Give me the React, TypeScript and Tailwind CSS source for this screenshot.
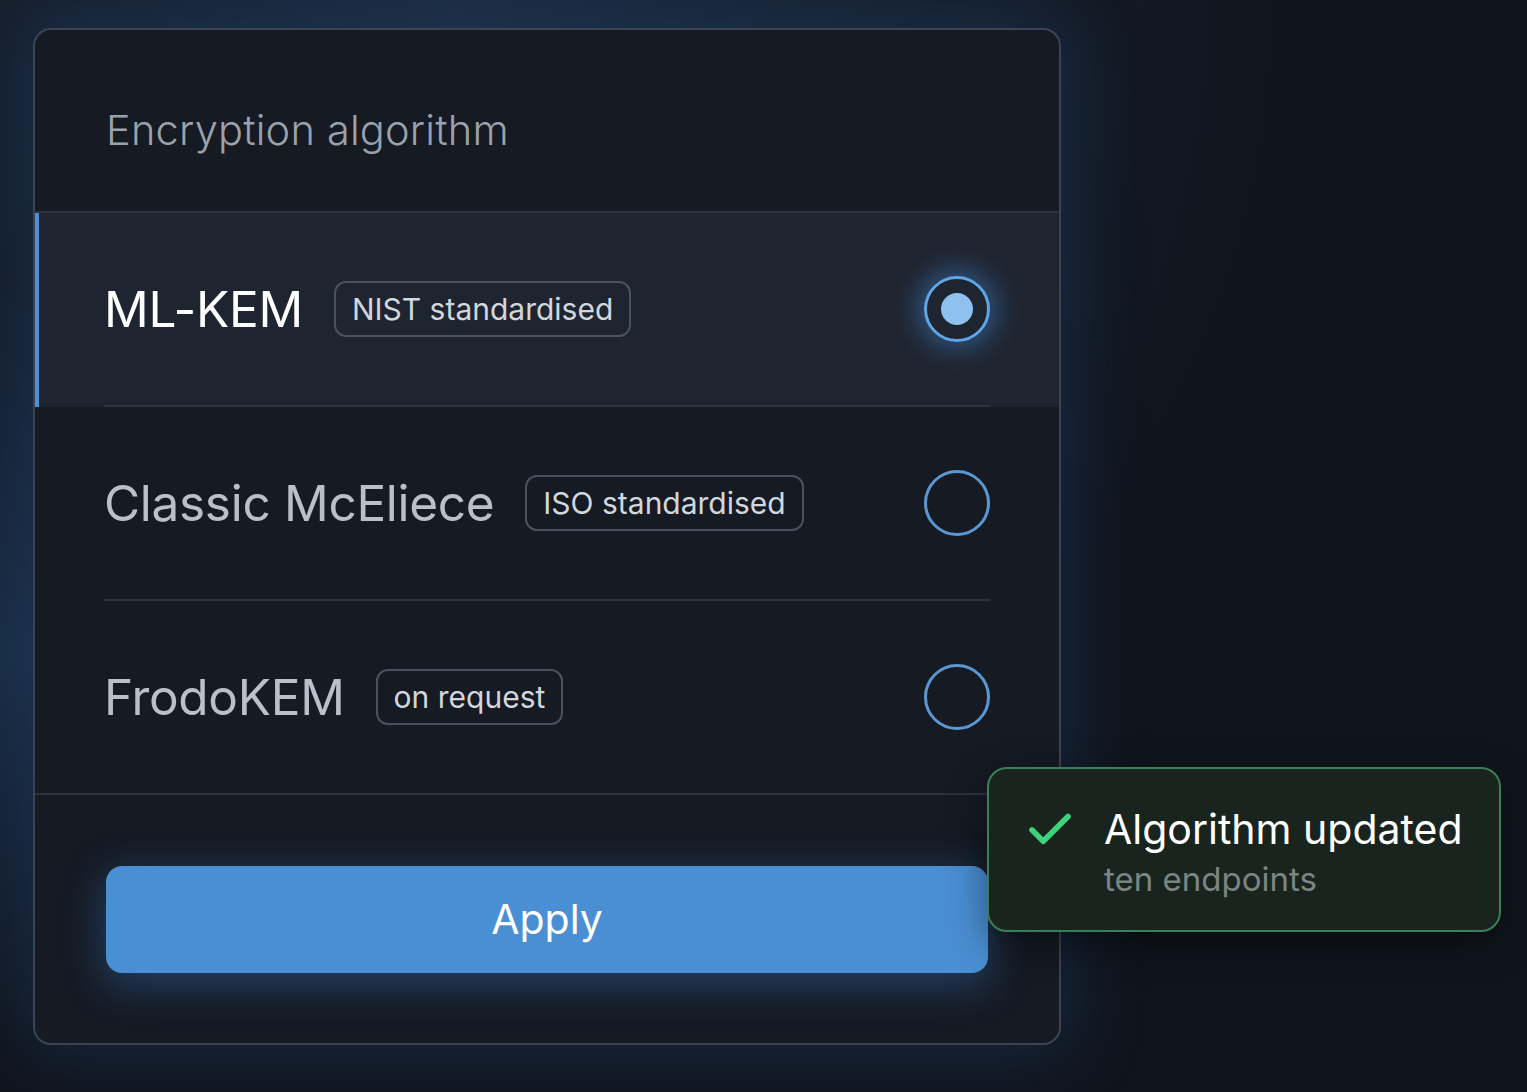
import { Check } from "lucide-react"

interface Algorithm {
  id: string
  name: string
  tag: string
  selected?: boolean
}

const algorithms: Algorithm[] = [
  { id: "ml-kem", name: "ML-KEM", tag: "NIST standardised", selected: true },
  { id: "mceliece", name: "Classic McEliece", tag: "ISO standardised" },
  { id: "frodo", name: "FrodoKEM", tag: "on request" },
]

function Radio({ checked }: { checked?: boolean }) {
  if (checked) {
    return (
      <div className="flex h-[66px] w-[66px] items-center justify-center rounded-full border-[3px] border-[#5ea5ea] shadow-[0_0_28px_6px_rgba(70,150,235,0.45)]">
        <div className="h-[32px] w-[32px] rounded-full bg-[#8fc1ef]" />
      </div>
    )
  }
  return <div className="h-[66px] w-[66px] rounded-full border-[3px] border-[#5b97d3]" />
}

export default function App() {
  return (
    <div
      className="relative h-[1092px] w-full overflow-hidden bg-[#10151d] pl-[33px] pt-[28px]"
      style={{ fontFamily: "Inter, 'Noto Sans', sans-serif" }}
    >
      <div className="pointer-events-none absolute inset-0 bg-[radial-gradient(ellipse_at_30%_0%,rgba(38,60,88,0.55),transparent_55%)]" />
      <div className="pointer-events-none absolute inset-0 bg-[radial-gradient(ellipse_at_0%_60%,rgba(32,58,92,0.6),transparent_40%)]" />

      {/* Card */}
      <div className="relative flex h-[1017px] w-[1028px] flex-col overflow-hidden rounded-[18px] border-2 border-[#3b4452] bg-[#151a23] shadow-[0_0_70px_10px_rgba(35,75,125,0.35)]">
        <div className="flex h-[183px] shrink-0 items-center border-b-2 border-[#2c333e] pl-[71px] pt-[20px]">
          <h2 className="text-[41.5px] font-light tracking-[0.2px] text-[#9aa2ad]">Encryption algorithm</h2>
        </div>

        <div className="border-b-2 border-[#2c333e]">
          {algorithms.map((algo, i) => (
            <div
              key={algo.id}
              className={
                algo.selected
                  ? "relative bg-[#1f2530] px-[69px]"
                  : "relative px-[69px]"
              }
            >
              {algo.selected && <div className="absolute bottom-0 left-0 top-0 w-[4px] bg-[#4d8fd9]" />}
              <div
                className={
                  i < algorithms.length - 1
                    ? "flex h-[194px] items-center border-b-2 border-[#2c333e]"
                    : "flex h-[192px] items-center"
                }
              >
                <span
                  className={
                    algo.selected
                      ? "text-[49.5px] font-normal tracking-[-0.3px] text-white"
                      : "text-[49.5px] font-normal tracking-[-0.3px] text-[#b9c0c9]"
                  }
                >
                  {algo.name}
                </span>
                <span className="ml-[31px] flex h-[56px] items-center rounded-[12px] border-2 border-[#4a525f] px-[16px] text-[30px] text-[#d2d7de]">
                  {algo.tag}
                </span>
                <div className="ml-auto">
                  <Radio checked={algo.selected} />
                </div>
              </div>
            </div>
          ))}
        </div>

        <div className="flex flex-1 items-start px-[71px] pt-[71px]">
          <button className="h-[107px] w-full rounded-[16px] bg-[#4a8fd3] text-[41px] text-white shadow-[0_10px_40px_4px_rgba(60,130,210,0.35)]">
            Apply
          </button>
        </div>
      </div>

      {/* Toast */}
      <div className="absolute left-[987px] top-[767px] flex h-[165px] w-[514px] items-start rounded-[20px] border-2 border-[#3b7f55] bg-[#19241f] pl-[34px] pt-[34px] shadow-[0_12px_40px_rgba(0,0,0,0.45)]">
        <Check className="h-[54px] w-[54px] text-[#3fd27d]" strokeWidth={2.5} />
        <div className="ml-[27px] flex flex-col">
          <span className="text-[41px] leading-[52px] text-white">Algorithm updated</span>
          <span className="mt-[4px] text-[33px] leading-[40px] text-[#7b8583]">ten endpoints</span>
        </div>
      </div>
    </div>
  )
}
